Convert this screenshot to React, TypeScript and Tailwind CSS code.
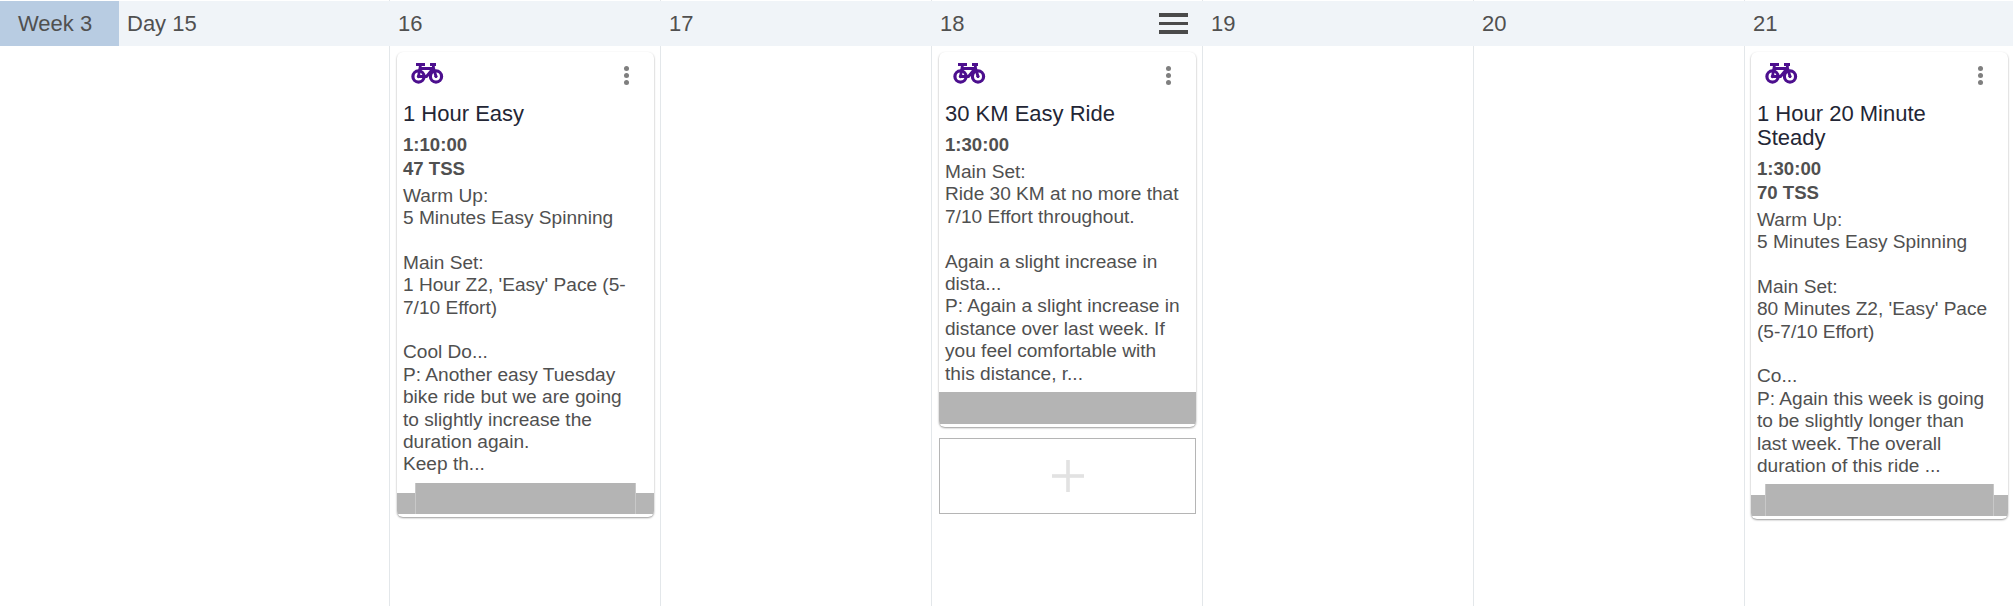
import React from "react";

function Bike() {
  return (
    <svg width="33" height="21" viewBox="0 0 33 21" fill="none" className="block text-[#4c0f8e]" stroke="currentColor">
      <circle cx="7.5" cy="13.5" r="5.6" strokeWidth="3.2" />
      <circle cx="25" cy="13.5" r="5.6" strokeWidth="3.2" />
      <circle cx="7.5" cy="13.5" r="1.2" fill="currentColor" strokeWidth="1" />
      <circle cx="25" cy="13.5" r="1.2" fill="currentColor" strokeWidth="1" />
      <path d="M5 1.6h9M19 1.6h6" strokeWidth="3" />
      <path d="M9.5 2 7.5 13.5h8L22.5 5 25 13.5M10 5.5h12.5M22 2l.8 3" strokeWidth="2.8" strokeLinejoin="round" />
    </svg>
  );
}

function Kebab() {
  return (
    <div className="flex flex-col gap-[2px]">
      <span className="block h-[5px] w-[5px] rounded-full bg-[#7f7f7f]" />
      <span className="block h-[5px] w-[5px] rounded-full bg-[#7f7f7f]" />
      <span className="block h-[5px] w-[5px] rounded-full bg-[#7f7f7f]" />
    </div>
  );
}

function Card({
  title,
  stats,
  body,
  stepped,
  narrow,
  last,
}: {
  title: string;
  stats: string[];
  body: string;
  stepped?: boolean;
  narrow?: boolean;
  last?: boolean;
}) {
  return (
    <div
      className={`mt-[6px] w-[257px] overflow-hidden rounded-[6px] bg-white pb-[3px] shadow-[0_1px_2px_rgba(0,0,0,0.4)] ${
        last ? "ml-[6px]" : "ml-[7px]"
      }`}
    >
      <div className="flex h-[50.4px] items-start justify-between pl-[14px] pr-[25px] pt-[11px]">
        <Bike />
        <div className="mt-[3px]">
          <Kebab />
        </div>
      </div>
      <div className="pl-[6px] pr-[14px]">
        <div className="text-[22px] leading-[24px] text-[#232635]">{title}</div>
        <div className="mb-[4px] mt-[7px] text-[18.6px] font-bold leading-[23.6px] text-[#505050]">
          {stats.map((s) => (
            <div key={s}>{s}</div>
          ))}
        </div>
        <div className="whitespace-pre-line text-[19.1px] leading-[22.4px] text-[#505050]">{body}</div>
      </div>
      {stepped ? (
        <div className="mt-[7px] flex items-end">
          <div className={`h-[21px] bg-[#b5b5b5] ${narrow ? "w-[14px]" : "w-[18px]"}`} />
          <div className={`flex-1 border-x border-[#c8c8c8] bg-[#b4b4b4] ${narrow ? "h-[32px]" : "h-[31px]"}`} />
          <div className={`h-[21px] bg-[#b5b5b5] ${narrow ? "w-[14px]" : "w-[18px]"}`} />
        </div>
      ) : (
        <div className="mt-[7px] h-[32px] bg-[#b4b4b4]" />
      )}
    </div>
  );
}

function Col({
  label,
  children,
  menu,
}: {
  label?: string;
  children?: React.ReactNode;
  menu?: boolean;
}) {
  return (
    <div className="w-[271px] shrink-0 border-l border-[#e3e7ea] pt-px">
      <div className="-ml-px flex h-[45px] items-center justify-between bg-[#f0f4f8] pl-[9px] pr-[14px] text-[22px] text-[#505050]">
        <span>{label}</span>
        {menu && (
          <div className="flex w-[29px] flex-col gap-[5px]">
            <span className="block h-[3.5px] bg-[#4a4a4a]" />
            <span className="block h-[3.5px] bg-[#4a4a4a]" />
            <span className="block h-[3.5px] bg-[#4a4a4a]" />
          </div>
        )}
      </div>
      {children}
    </div>
  );
}

export default function App() {
  return (
    <div className="flex h-[606px] w-[2013px] overflow-hidden bg-white font-['Liberation_Sans',Arial,sans-serif]">
      <div className="w-[389px] shrink-0 pt-px">
        <div className="flex h-[45px] items-center bg-[#f0f4f8] text-[22px] text-[#505050]">
          <div className="flex h-full w-[119px] items-center bg-[#b8cce2] pl-[18px]">Week 3</div>
          <div className="pl-[8px]">Day 15</div>
        </div>
      </div>
      <Col label="16">
        <Card
          title="1 Hour Easy"
          stats={["1:10:00", "47 TSS"]}
          stepped
          body={"Warm Up:\n5 Minutes Easy Spinning\n\nMain Set:\n1 Hour Z2, 'Easy' Pace (5-7/10 Effort)\n\nCool Do...\nP: Another easy Tuesday bike ride but we are going to slightly increase the duration again.\nKeep th..."}
        />
      </Col>
      <Col label="17" />
      <Col label="18" menu>
        <Card
          title="30 KM Easy Ride"
          stats={["1:30:00"]}
          body={"Main Set:\nRide 30 KM at no more that 7/10 Effort throughout.\n\nAgain a slight increase in dista...\nP: Again a slight increase in distance over last week. If you feel comfortable with this distance, r..."}
        />
        <div className="ml-[7px] mt-[11px] flex h-[76px] w-[257px] items-center justify-center border border-[#b5b5b5]">
          <svg width="32" height="32" viewBox="0 0 32 32" className="block text-[#e2e2e2]" fill="currentColor">
            <rect x="14.2" y="0" width="3.6" height="32" />
            <rect x="0" y="14.2" width="32" height="3.6" />
          </svg>
        </div>
      </Col>
      <Col label="19" />
      <Col label="20" />
      <Col label="21">
        <Card
          last
          title="1 Hour 20 Minute Steady"
          stats={["1:30:00", "70 TSS"]}
          stepped
          narrow
          body={"Warm Up:\n5 Minutes Easy Spinning\n\nMain Set:\n80 Minutes Z2, 'Easy' Pace (5-7/10 Effort)\n\nCo...\nP: Again this week is going to be slightly longer than last week. The overall duration of this ride ..."}
        />
      </Col>
    </div>
  );
}
